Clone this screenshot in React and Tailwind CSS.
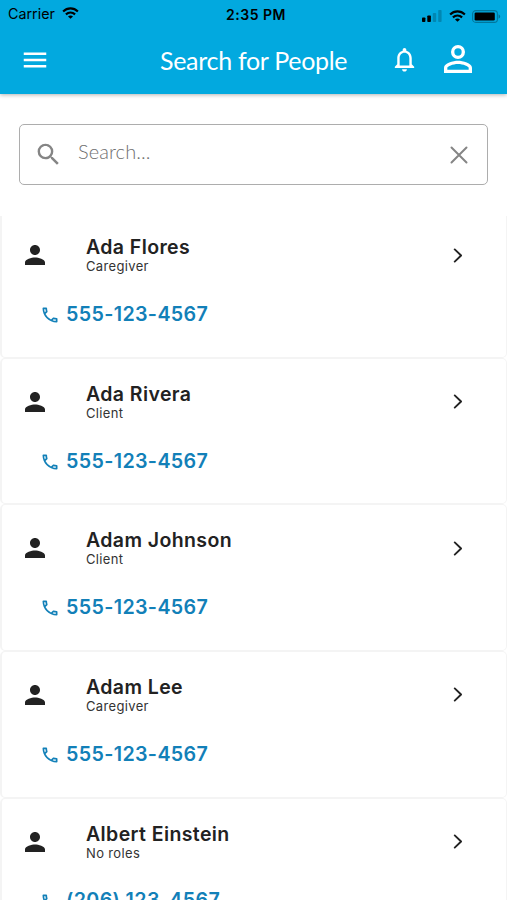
import React from "react";

const people = [
  { name: "Ada Flores", role: "Caregiver", phone: "555-123-4567" },
  { name: "Ada Rivera", role: "Client", phone: "555-123-4567" },
  { name: "Adam Johnson", role: "Client", phone: "555-123-4567" },
  { name: "Adam Lee", role: "Caregiver", phone: "555-123-4567" },
  { name: "Albert Einstein", role: "No roles", phone: "(206) 123-4567" },
];

function Icon({ d, className = "" }) {
  return (
    <svg viewBox="0 0 24 24" fill="currentColor" className={`shrink-0 ${className}`}>
      <path d={d} />
    </svg>
  );
}

function Wifi({ className = "" }) {
  return (
    <svg viewBox="0 0 18 13" fill="none" stroke="currentColor" strokeWidth="2.3" className={`shrink-0 ${className}`}>
      <path d="M1 4.8C5.6.4 12.4.4 17 4.8" />
      <path d="M4 8c3-2.7 7-2.7 10 0" />
      <path d="M9 12.8 6.3 10.2c1.5-1.3 3.9-1.3 5.4 0z" fill="currentColor" stroke="none" />
    </svg>
  );
}

function StatusBar() {
  return (
    <div className="flex h-7 items-center text-black">
      <div className="flex flex-1 items-center pl-2">
        <span className="text-[14.3px]">Carrier</span>
        <Wifi className="-mt-[2px] ml-[7px] h-[12px] w-[17px]" />
      </div>
      <span className="pl-[3px] text-[14px] font-semibold tracking-[0.5px]">2:35 PM</span>
      <div className="flex flex-1 items-center justify-end pt-[4px] pr-[6px]">
        <svg viewBox="0 0 20 12" className="h-3 w-5" fill="currentColor">
          <rect x="0" y="7.5" width="3.4" height="4.5" rx="0.8" />
          <rect x="5.3" y="5.5" width="3.6" height="6.5" rx="0.8" />
          <rect x="10.8" y="3" width="3.4" height="9" rx="0.8" opacity="0.2" />
          <rect x="16.2" y="0" width="3.4" height="12" rx="0.8" opacity="0.2" />
        </svg>
        <Wifi className="ml-[7px] h-[12px] w-[17px]" />
        <svg viewBox="0 0 29 13" className="ml-[6px] h-[13px] w-[29px]" fill="currentColor">
          <rect x="0.6" y="0.6" width="24.8" height="11.8" rx="3.2" fill="none" stroke="currentColor" strokeWidth="1.1" opacity="0.3" />
          <rect x="2.6" y="2.4" width="20.2" height="8.2" rx="1.3" />
          <path d="M26.6 4.3v4.4q1.6-.7 1.6-2.2t-1.6-2.2" opacity="0.35" />
        </svg>
      </div>
    </div>
  );
}

function Header() {
  return (
    <header className="h-[94px] shrink-0 bg-[#02a9df] shadow-[0_1px_4px_rgba(0,0,0,0.3)]">
      <StatusBar />
      <div className="flex h-[64px] items-center text-white">
        <Icon d="M3 18h18v-2H3v2zm0-5h18v-2H3v2zm0-7v2h18V6H3z" className="ml-5 size-[30px]" />
        <h1 className="ml-[110px] w-[188px] whitespace-nowrap font-['Lato',sans-serif] text-[25px] leading-none tracking-[-0.3px]">
          Search for People
        </h1>
        <Icon
          d="M12 22c1.1 0 2-.9 2-2h-4c0 1.1.9 2 2 2zm6-6v-5c0-3.07-1.63-5.64-4.5-6.32V4c0-.83-.67-1.5-1.5-1.5s-1.5.67-1.5 1.5v.68C7.64 5.36 6 7.92 6 11v5l-2 2v1h16v-1l-2-2zm-2 1H8v-6c0-2.48 1.51-4.5 4-4.5s4 2.02 4 4.5v6z"
          className="-mt-[2px] ml-[42px] size-[29px]"
        />
        <Icon
          d="M12 5.9a2.1 2.1 0 1 1 0 4.2 2.1 2.1 0 0 1 0-4.2m0 9c2.97 0 6.1 1.46 6.1 2.1v1.1H5.9V17c0-.64 3.13-2.1 6.1-2.1M12 4a4 4 0 1 0 0 8 4 4 0 0 0 0-8m0 9c-2.67 0-8 1.34-8 4v3h16v-3c0-2.66-5.33-4-8-4"
          className="ml-[18px] -mt-[3px] size-[42px]"
        />
      </div>
    </header>
  );
}

function SearchBox() {
  return (
    <div className="mx-[19px] mt-[30px] flex h-[61px] shrink-0 items-center rounded-[5px] border-[1.5px] border-[#adadad] pr-[19px] pl-[14px] text-[#858585]">
      <Icon
        d="M15.5 14h-.79l-.28-.27A6.471 6.471 0 0 0 16 9.5 6.5 6.5 0 1 0 9.5 16c1.61 0 3.09-.59 4.23-1.57l.27.28v.79l5 4.99L20.49 19l-4.99-5zm-6 0C7.01 14 5 11.99 5 9.5S7.01 5 9.5 5 14 7.01 14 9.5 11.99 14 9.5 14z"
        className="size-[29px]"
      />
      <input
        type="text"
        placeholder="Search..."
        className="ml-[15px] min-w-0 flex-1 pb-[8px] font-['Lato',sans-serif] text-[20px] font-light tracking-[0.1px] placeholder:text-[#6f6f6f] focus:outline-none"
      />
      <svg viewBox="0 0 18 18" className="size-[18px]" fill="none" stroke="currentColor" strokeWidth="2" strokeLinecap="round">
        <path d="M1.5 1.5l15 15M16.5 1.5l-15 15" />
      </svg>
    </div>
  );
}

function PersonCard({ name, role, phone }) {
  return (
    <li className="h-[146.6px] shrink-0 rounded-[5px] border border-l-2 border-[#f4f4f4] bg-white">
      <div className="flex h-[86px] items-center pl-[18px]">
        <Icon
          d="M12 12c2.21 0 4-1.79 4-4s-1.79-4-4-4-4 1.79-4 4 1.79 4 4 4zm0 2c-2.67 0-8 1.34-8 4v2h16v-2c0-2.66-5.33-4-8-4z"
          className="size-[30px] text-[#222]"
        />
        <div className="ml-9 flex-1">
          <h2 className="text-[19.5px] leading-[23px] font-semibold tracking-[0.4px] text-[#222]">{name}</h2>
          <p className="text-[13px] leading-[15px] tracking-[0.35px] text-[#333]">{role}</p>
        </div>
        <svg viewBox="0 0 10 16" className="mr-[43px] h-[15px] w-[10px] text-[#222]" fill="none" stroke="currentColor" strokeWidth="2" strokeLinecap="round" strokeLinejoin="round">
          <path d="M1.5 1.5 8.3 8l-6.8 6.5" />
        </svg>
      </div>
      <a className="flex h-[33px] items-center pl-[38px] text-[#1280b8]">
        <Icon
          d="M6.54 5c.06.89.21 1.76.45 2.59l-1.2 1.2c-.41-1.2-.67-2.47-.76-3.79h1.51m9.86 12.02c.85.24 1.72.39 2.6.45v1.49c-1.32-.09-2.59-.35-3.8-.75l1.2-1.19M7.5 3H4c-.55 0-1 .45-1 1 0 9.39 7.61 17 17 17 .55 0 1-.45 1-1v-3.49c0-.55-.45-1-1-1-1.24 0-2.45-.2-3.57-.57a.84.84 0 0 0-.31-.05c-.26 0-.51.1-.71.29l-2.2 2.2a15.149 15.149 0 0 1-6.59-6.59l2.2-2.2c.28-.28.36-.67.25-1.02A11.36 11.36 0 0 1 8.5 4c0-.55-.45-1-1-1z"
          className="mt-px size-5"
        />
        <span className="ml-[6px] text-[19.7px] font-semibold tracking-[0.35px]">{phone}</span>
      </a>
    </li>
  );
}

export default function App() {
  return (
    <main className="flex h-[900px] w-full flex-col overflow-hidden bg-white font-['Inter',sans-serif]">
      <Header />
      <SearchBox />
      <div className="mt-[31px] flex-1 overflow-hidden">
        <ul className="-mt-[4.8px] flex flex-col">
          {people.map((person) => (
            <PersonCard key={person.name} {...person} />
          ))}
        </ul>
      </div>
    </main>
  );
}
